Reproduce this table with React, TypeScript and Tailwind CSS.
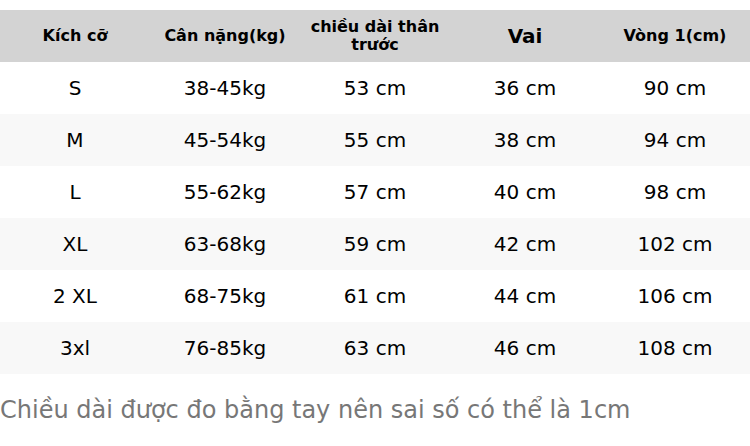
const headers = [
  { label: "Kích cỡ", cls: "text-[16px]" },
  { label: "Cân nặng(kg)", cls: "text-[16px]" },
  { label: "chiều dài thân trước", cls: "text-[16px] leading-[18px]" },
  { label: "Vai", cls: "text-[20px]" },
  { label: "Vòng 1(cm)", cls: "text-[16px]" },
];

const rows = [
  ["S", "38-45kg", "53 cm", "36 cm", "90 cm"],
  ["M", "45-54kg", "55 cm", "38 cm", "94 cm"],
  ["L", "55-62kg", "57 cm", "40 cm", "98 cm"],
  ["XL", "63-68kg", "59 cm", "42 cm", "102 cm"],
  ["2 XL", "68-75kg", "61 cm", "44 cm", "106 cm"],
  ["3xl", "76-85kg", "63 cm", "46 cm", "108 cm"],
];

export default function App() {
  return (
    <div className="w-[750px] h-[446px] bg-white pt-2.5 font-['DejaVu_Sans',sans-serif] text-black">
      {/* header */}
      <div className="grid grid-cols-5 h-[52px] bg-[#d3d3d3]">
        {headers.map((h) => (
          <div key={h.label} className="flex items-center justify-center px-2 text-center">
            <span className={`font-bold ${h.cls}`}>{h.label}</span>
          </div>
        ))}
      </div>

      {/* rows */}
      {rows.map((row, i) => (
        <div
          key={row[0]}
          className={`grid grid-cols-5 h-[52px] ${i % 2 === 1 ? "bg-[#f8f8f8]" : "bg-white"}`}
        >
          {row.map((cell, j) => (
            <div key={j} className="flex items-center justify-center text-[20px]">
              {cell}
            </div>
          ))}
        </div>
      ))}

      <p className="mt-5 text-[24px] leading-8 text-[#777777] whitespace-nowrap">
        Chiều dài được đo bằng tay nên sai số có thể là 1cm
      </p>
    </div>
  );
}
